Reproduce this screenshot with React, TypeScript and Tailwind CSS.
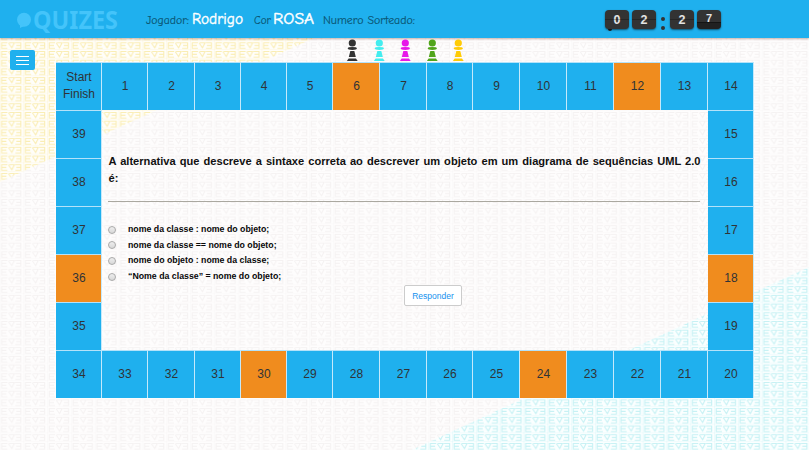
import React from "react";

const special = [6, 12, 18, 24, 30, 36];
const columns = "grid grid-cols-[46px_46px_47px_46px_46px_46px_47px_47px_46px_47px_47px_47px_47px_47px_46px]";
const top = ["Start Finish", "1", "2", "3", "4", "5", "6", "7", "8", "9", "10", "11", "12", "13", "14"];
const bottom = ["34", "33", "32", "31", "30", "29", "28", "27", "26", "25", "24", "23", "22", "21", "20"];
const left = ["39", "38", "37", "36", "35"];
const right = ["15", "16", "17", "18", "19"];

function Cell({ label }: { label: string }) {
  const color = special.includes(Number(label)) ? "bg-[#f08c1e]" : "bg-[#1fb0ee]";
  const pad = label.startsWith("Start") ? "pb-[2px]" : "";
  return (
    <div className={`h-12 ${color} ${pad} flex items-center justify-center border-t border-r border-t-[#b4e2f9] border-r-[#c5e9fb] pl-px text-center text-[12px] leading-[17px] text-[#303336]`}>
      <span className="max-w-[36px]">{label}</span>
    </div>
  );
}

function Tile({ id, color }: { id: string; color: string }) {
  return (
    <pattern id={id} x="-0.6" y="6.5" width="23.82" height="8.71" patternUnits="userSpaceOnUse">
      <path d="M8 1.5H2.2V7H8M2.2 4.2H7M9 1.5L12.8 7M12.2 7L15 1.5H10M16 1.5H21.5V7H16M17 4.2H21.5" fill="none" stroke={color} strokeWidth="1.1" />
      <path d="M0.4 0V8.71M0 8.5H24" fill="none" stroke={color} strokeWidth="0.7" opacity="0.4" />
    </pattern>
  );
}

function Backdrop() {
  return (
    <svg className="absolute inset-0 -z-10" width="809" height="450" aria-hidden="true">
      <defs>
        <Tile id="gray" color="#f5f2f2" />
        <Tile id="yellow" color="#faedb4" />
        <Tile id="cyan" color="#c6f1f4" />
      </defs>
      <rect width="809" height="450" fill="#fefdfd" />
      <rect width="809" height="450" fill="url(#gray)" />
      <path d="M0 38H314L0 182Z" fill="#fffefa" />
      <path d="M0 38H314L0 182Z" fill="url(#yellow)" />
      <path d="M412 450L809 267V450Z" fill="#fbffff" />
      <path d="M412 450L809 267V450Z" fill="url(#cyan)" />
    </svg>
  );
}

function Pawn({ color }: { color: string }) {
  return (
    <svg width="12" height="22" viewBox="0 0 12 22" fill={color}>
      <circle cx="6.3" cy="4" r="3.6" />
      <ellipse cx="6.3" cy="9.5" rx="4.6" ry="1.4" />
      <path d="M4.3 12H8.3L9.8 18H2.8Z" />
      <path d="M2.6 19.6H10L11.7 22H0.9Z" />
    </svg>
  );
}

function Digit({ value, turning = false }: { value: string; turning?: boolean }) {
  return (
    <div className={`relative flex h-[19px] w-[24px] justify-center rounded-[4px] bg-[#333333] font-bold text-[#e4e4e4] shadow-[0_1px_2px_rgba(0,0,0,0.55)] ${turning ? "text-[11px] leading-[17px]" : "text-[12.5px] leading-[20px]"}`}>
      {value}
      <span className={`absolute inset-x-0 h-px ${turning ? "top-[12px] bg-black/60" : "top-[9px] bg-black/25"}`} />
      {turning && <span className="absolute inset-x-0 bottom-0 h-[6px] rounded-b-[4px] bg-black/35" />}
    </div>
  );
}

function Header() {
  return (
    <header className="flex h-[38px] items-start bg-[#1fb0ee] shadow-[0_1px_2px_rgba(120,60,40,0.4)]">
      <svg className="shrink-0" width="145" height="38">
        <circle cx="24" cy="19.7" r="7" fill="#44c4fa" />
        <path d="M20 24L20 28L26 25Z" fill="#44c4fa" />
        <text x="33" y="28.5" fontSize="25.5" fontWeight="700" fontFamily="'Noto Sans', sans-serif" textLength="85" lengthAdjust="spacingAndGlyphs" fill="#44c4fa">QUIZES</text>
      </svg>
      <svg className="shrink-0" width="460" height="38" fontFamily="'Comic Neue', 'Comic Sans MS', Lato, sans-serif">
        <g fill="#0b5573" stroke="#0b5573" strokeWidth="0.15" fontSize="11.5">
          <text x="1" y="24" textLength="43" lengthAdjust="spacingAndGlyphs">Jogador:</text>
          <text x="109" y="24" textLength="17" lengthAdjust="spacingAndGlyphs">Cor</text>
          <text x="178" y="24" textLength="92" lengthAdjust="spacingAndGlyphs">Numero Sorteado:</text>
        </g>
        <g fill="#ffffff" stroke="#ffffff" strokeWidth="0.4" fontSize="15.5">
          <text x="47" y="24" textLength="51" lengthAdjust="spacingAndGlyphs">Rodrigo</text>
          <text x="128" y="24" textLength="41" lengthAdjust="spacingAndGlyphs">ROSA</text>
        </g>
      </svg>
      <div className="relative mt-[10px] flex gap-[3px]">
        <i className="absolute top-[17px] left-[3px] h-[4px] w-[4px] rounded-full bg-[#222222]" />
        <Digit value="0" />
        <Digit value="2" />
        <div className="flex w-[8px] flex-col items-center gap-[5px] pt-[7px]">
          <i className="h-[4px] w-[4px] rounded-full bg-[#333333]" />
          <i className="h-[4px] w-[4px] rounded-full bg-[#333333]" />
        </div>
        <Digit value="2" />
        <Digit value="7" turning />
      </div>
    </header>
  );
}

const answers = [
  "nome da classe : nome do objeto;",
  "nome da classe == nome do objeto;",
  "nome do objeto : nome da classe;",
  "“Nome da classe” = nome do objeto;",
];

function Question() {
  return (
    <main className="flex w-[606px] flex-col px-[6px] pt-[43px]">
      <h1 className="ml-[0.5px] w-[592px] text-[11.1px] leading-[17px] font-bold text-[#111111]">
        <span className="block whitespace-nowrap [text-align-last:justify]">A alternativa que descreve a sintaxe correta ao descrever um objeto em um diagrama de sequências UML 2.0</span>
        é:
      </h1>
      <hr className="mt-[14px] w-[592px] border-[#aaa8a0]" />
      <div className="mt-[20px]">
        {answers.map((answer) => (
          <label key={answer} className="flex h-[15.6px] items-center text-[8.78px] font-bold text-[#080808]">
            <span className="mr-[12px] h-[8px] w-[8px] rounded-full border border-[#aaaaaa] bg-gradient-to-b from-[#eeeeee] to-[#d8d8d8]" />
            {answer}
          </label>
        ))}
      </div>
      <button className="mt-[1px] ml-[296px] h-[21px] w-[58px] rounded-[2px] border border-[#cccccc] bg-white text-[8.5px] text-[#1591ee]">Responder</button>
    </main>
  );
}

export default function App() {
  return (
    <div className="relative isolate h-[450px] w-[809px] overflow-hidden font-['Liberation_Sans',Arial,sans-serif]">
      <Backdrop />
      <Header />
      <div className="flex h-[24px]">
        <button aria-label="Menu" className="mt-[12px] ml-[10px] flex h-[20px] w-[25px] shrink-0 flex-col items-center justify-center gap-[3px] rounded-[2px] bg-[#1fb0ee]">
          <i className="h-px w-[13px] bg-white" />
          <i className="h-px w-[13px] bg-white" />
          <i className="h-px w-[13px] bg-white" />
        </button>
        <div className="mt-[1px] ml-[311px] flex gap-[14.5px]">
          <Pawn color="#333333" />
          <Pawn color="#43edef" />
          <Pawn color="#e718e9" />
          <Pawn color="#51a51b" />
          <Pawn color="#ffcb05" />
        </div>
      </div>
      <section className="ml-[56px] w-[698px]">
        <div className={columns}>{top.map((n) => <Cell key={n} label={n} />)}</div>
        <div className="flex h-[240px]">
          <div className="w-[46px]">{left.map((n) => <Cell key={n} label={n} />)}</div>
          <Question />
          <div className="w-[46px]">{right.map((n) => <Cell key={n} label={n} />)}</div>
        </div>
        <div className={columns}>{bottom.map((n) => <Cell key={n} label={n} />)}</div>
      </section>
    </div>
  );
}
